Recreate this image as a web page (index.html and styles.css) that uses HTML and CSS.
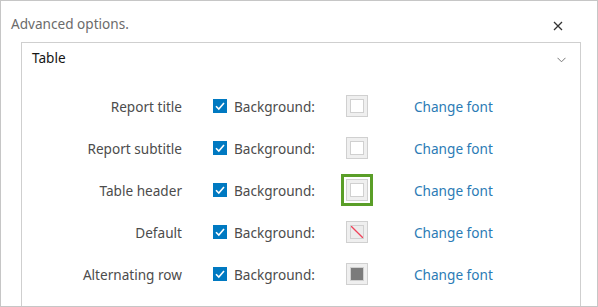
FILE: index.html
```html
<!DOCTYPE html>
<html lang="en">
<head>
<meta charset="utf-8">
<title>Advanced options</title>
<link rel="stylesheet" href="styles.css">
</head>
<body>
<div class="dialog">
	<div class="dialog_head">
		<span class="dialog_title">Advanced options.</span>
		<svg class="close" width="10" height="10" viewBox="0 0 10 10"><path d="M1 1L9 9M9 1L1 9" stroke="#333" stroke-width="1.3"/></svg>
	</div>
	<div class="panel">
		<div class="panel_head">
			<span>Table</span>
			<svg class="chevron" width="9" height="6" viewBox="0 0 9 6"><path d="M0.5 0.8L4.5 4.8L8.5 0.8" fill="none" stroke="#777" stroke-width="1"/></svg>
		</div>
		<ul class="rows">
			<li>
				<span class="row_label">Report title</span>
				<span class="check"><svg width="14" height="14" viewBox="0 0 14 14"><path d="M3 7.2L5.8 10L11 4" fill="none" stroke="#fff" stroke-width="1.6"/></svg></span>
				<span class="bg_label">Background:</span>
				<span class="swatch"><span class="swatch_in"></span></span>
				<a class="font_link" href="#">Change font</a>
			</li>
			<li>
				<span class="row_label">Report subtitle</span>
				<span class="check"><svg width="14" height="14" viewBox="0 0 14 14"><path d="M3 7.2L5.8 10L11 4" fill="none" stroke="#fff" stroke-width="1.6"/></svg></span>
				<span class="bg_label">Background:</span>
				<span class="swatch"><span class="swatch_in"></span></span>
				<a class="font_link" href="#">Change font</a>
			</li>
			<li>
				<span class="row_label">Table header</span>
				<span class="check"><svg width="14" height="14" viewBox="0 0 14 14"><path d="M3 7.2L5.8 10L11 4" fill="none" stroke="#fff" stroke-width="1.6"/></svg></span>
				<span class="bg_label">Background:</span>
				<span class="swatch selected"><span class="swatch_in"></span></span>
				<a class="font_link" href="#">Change font</a>
			</li>
			<li>
				<span class="row_label">Default</span>
				<span class="check"><svg width="14" height="14" viewBox="0 0 14 14"><path d="M3 7.2L5.8 10L11 4" fill="none" stroke="#fff" stroke-width="1.6"/></svg></span>
				<span class="bg_label">Background:</span>
				<span class="swatch"><span class="swatch_in none"><svg width="12" height="12" viewBox="0 0 12 12"><path d="M0 0L12 12" stroke="#f0435a" stroke-width="1.3"/></svg></span></span>
				<a class="font_link" href="#">Change font</a>
			</li>
			<li>
				<span class="row_label">Alternating row</span>
				<span class="check"><svg width="14" height="14" viewBox="0 0 14 14"><path d="M3 7.2L5.8 10L11 4" fill="none" stroke="#fff" stroke-width="1.6"/></svg></span>
				<span class="bg_label">Background:</span>
				<span class="swatch"><span class="swatch_in grey"></span></span>
				<a class="font_link" href="#">Change font</a>
			</li>
		</ul>
	</div>
</div>
</body>
</html>
```

FILE: styles.css
```css
html, body {
	margin: 0;
	padding: 0;
	background: #fff;
}
body {
	font: normal 13.6px "Noto Sans", "Open Sans", sans-serif;
	color: #4c4c4c;
}

/* dialog frame */
.dialog {
	box-sizing: border-box;
	width: 598px;
	height: 307px;
	border: 1px solid #c6c6c6;
	overflow: hidden;
}
.dialog_head {
	display: flex;
	align-items: center;
	justify-content: space-between;
	height: 41px;
	padding: 0 34px 0 10px;
}
.dialog_title {
	color: #6b6b6b;
	position: relative;
	top: 2px;
}
.close {
	position: relative;
	top: 4px;
}

/* collapsible panel */
.panel {
	margin: 0 16px 0 20px;
	border: 1px solid #cfcfcf;
	height: 300px;
}
.panel_head {
	display: flex;
	align-items: center;
	justify-content: space-between;
	height: 29px;
	padding: 0 14px 0 10px;
	color: #151515;
}
.chevron {
	position: relative;
	top: 2px;
}

.rows {
	list-style-type: none;
	margin: 0;
	padding: 13px 0 0 0;
}
.rows li {
	display: flex;
	align-items: center;
	height: 42px;
}
.row_label {
	width: 160px;
	text-align: right;
}
.check {
	display: block;
	width: 14px;
	height: 14px;
	margin-left: 31px;
	background: #0079c1;
}
.check svg {
	display: block;
}
.bg_label {
	width: 112px;
	margin-left: 7px;
}
.swatch {
	box-sizing: border-box;
	width: 22px;
	height: 22px;
	border: 1px solid #d0d0d0;
	background: #efefef;
	display: flex;
	align-items: center;
	justify-content: center;
}
.swatch.selected {
	outline: 3px solid #5a9e28;
	outline-offset: 2px;
}
.swatch_in {
	box-sizing: border-box;
	width: 14px;
	height: 14px;
	border: 1px solid #d0d0d0;
	background: #fff;
	overflow: hidden;
}
.swatch_in.none {
	background: #ececec;
}
.swatch_in.none svg {
	display: block;
}
.swatch_in.grey {
	background: #7b7b7b;
}
.font_link {
	margin-left: 46px;
	color: #2b7bb5;
	text-decoration: none;
}
```
